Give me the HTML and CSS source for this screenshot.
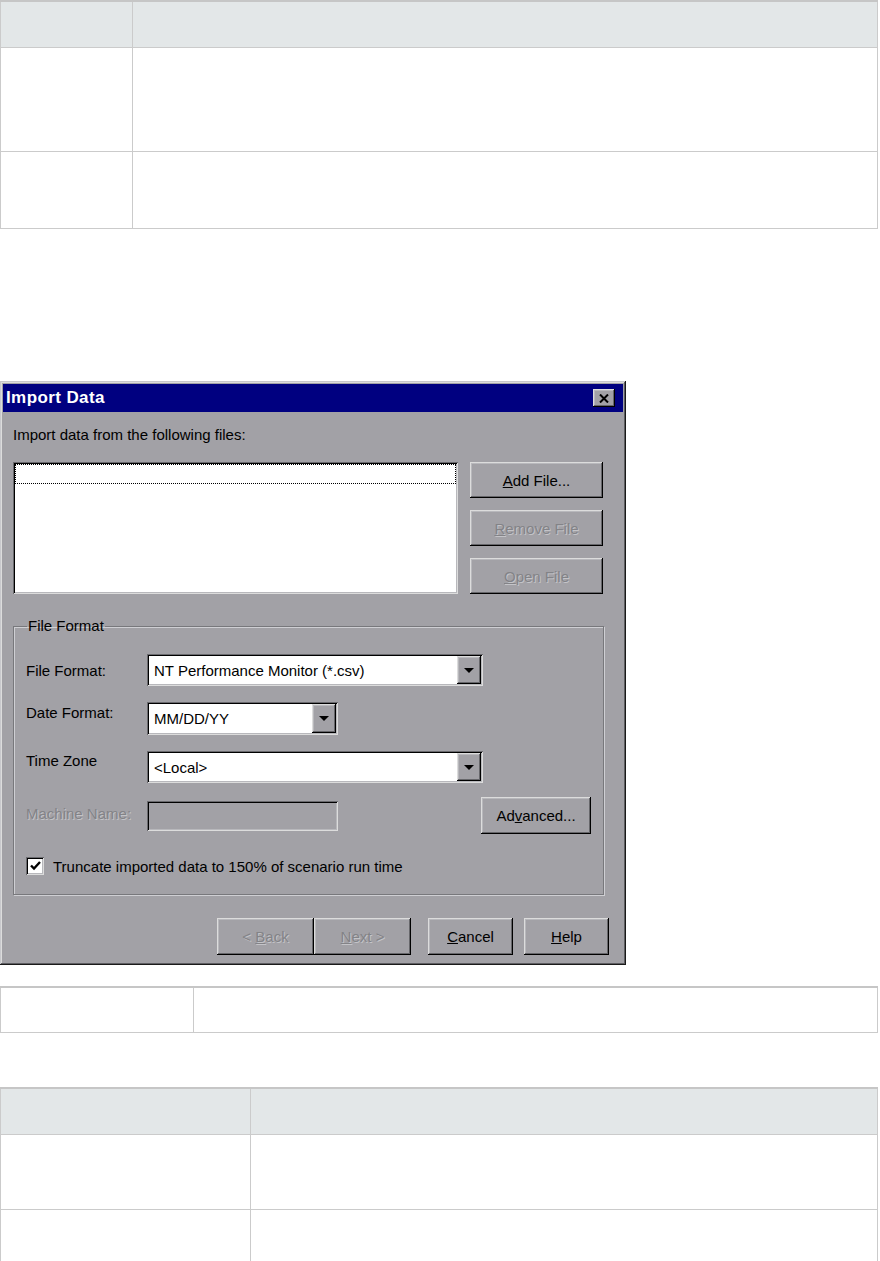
FILE: index.html
```html
<!DOCTYPE html>
<html lang="en">
<head>
    <meta charset="UTF-8">
    <meta name="viewport" content="width=device-width, initial-scale=1.0">
    <title>Import Data</title>
    <link rel="stylesheet" href="styles.css">
</head>
<body>
    <table class="doc-table t1">
        <colgroup><col class="c1"><col></colgroup>
        <tr class="head"><th></th><th></th></tr>
        <tr class="r-tall"><td></td><td></td></tr>
        <tr class="r-mid"><td></td><td></td></tr>
    </table>

    <div class="dialog">
        <div class="titlebar">
            <span class="title">Import Data</span>
            <span class="close-btn raised">
                <svg width="10" height="9" viewBox="0 0 10 9"><path d="M1 0.5 L9 8.5 M9 0.5 L1 8.5" stroke="#000" stroke-width="2"/></svg>
            </span>
        </div>

        <div class="dlg-body">
            <p class="caption">Import data from the following files:</p>
            <div class="files">
                <div class="listbox sunken">
                    <div class="focus-row"></div>
                </div>
                <div class="file-buttons">
                    <div class="btn raised"><span><u>A</u>dd File...</span></div>
                    <div class="btn raised disabled"><span><u>R</u>emove File</span></div>
                    <div class="btn raised disabled"><span><u>O</u>pen File</span></div>
                </div>
            </div>

            <fieldset class="group">
                <legend>File Format</legend>
                <div class="row row-1">
                    <label class="lbl">File Format:</label>
                    <div class="combo sunken wide">
                        <span class="combo-text">NT Performance Monitor (*.csv)</span>
                        <span class="drop raised"><i class="tri"></i></span>
                    </div>
                </div>
                <div class="row row-2">
                    <label class="lbl">Date Format:</label>
                    <div class="combo sunken narrow">
                        <span class="combo-text">MM/DD/YY</span>
                        <span class="drop raised"><i class="tri"></i></span>
                    </div>
                </div>
                <div class="row row-3">
                    <label class="lbl">Time Zone</label>
                    <div class="combo sunken wide">
                        <span class="combo-text">&lt;Local&gt;</span>
                        <span class="drop raised"><i class="tri"></i></span>
                    </div>
                </div>
                <div class="row row-4">
                    <label class="lbl disabled">Machine Name:</label>
                    <div class="edit sunken"></div>
                    <div class="btn raised adv"><span>Ad<u>v</u>anced...</span></div>
                </div>
                <div class="row row-5">
                    <span class="check sunken">
                        <svg width="11" height="10" viewBox="0 0 11 10"><path d="M1 4.5 L4 7.5 L10 1" fill="none" stroke="#000" stroke-width="2.4"/></svg>
                    </span>
                    <span class="check-text">Truncate imported data to 150% of scenario run time</span>
                </div>
            </fieldset>

            <div class="footer">
                <div class="btn raised disabled back"><span>&lt; <u>B</u>ack</span></div>
                <div class="btn raised disabled next"><span><u>N</u>ext &gt;</span></div>
                <div class="btn raised cancel"><span><u>C</u>ancel</span></div>
                <div class="btn raised help"><span><u>H</u>elp</span></div>
            </div>
        </div>
    </div>

    <table class="doc-table t2">
        <colgroup><col class="c1"><col></colgroup>
        <tr class="r-short"><td></td><td></td></tr>
    </table>

    <table class="doc-table t3">
        <colgroup><col class="c1"><col></colgroup>
        <tr class="head"><th></th><th></th></tr>
        <tr class="r-row"><td></td><td></td></tr>
        <tr class="r-last"><td></td><td></td></tr>
    </table>
</body>
</html>
```

FILE: styles.css
```css
body {
    margin: 0;
    background-color: white;
    font-family: 'Liberation Sans', Arial, sans-serif;
}

/* doc tables */
.doc-table {
    width: 878px;
    border-collapse: collapse;
    table-layout: fixed;
    border-top: 2px solid #c6c6c6;
}
.doc-table th, .doc-table td {
    border: 1px solid #cbcbcb;
    padding: 0;
}
.doc-table .head th {
    background-color: #e3e7e8;
    height: 45px;
}
.t1 .c1 { width: 132px; }
.t1 .r-tall td { height: 103px; }
.t1 .r-mid td { height: 76px; }
.t2 { margin-top: 21px; }
.t2 .c1 { width: 193px; }
.t2 .r-short td { height: 44px; }
.t3 { margin-top: 54px; }
.t3 .c1 { width: 250px; }
.t3 .r-row td { height: 74px; }
.t3 .r-last td { height: 60px; border-bottom: none; }

/* dialog */
.dialog {
    margin-top: 152px;
    width: 626px;
    height: 584px;
    box-sizing: border-box;
    padding: 3px;
    background-color: #a2a1a6;
    box-shadow: inset -1px -1px #1a1a1a, inset 1px 1px #c8c8cc, inset -2px -2px #5e5e62, inset 2px 2px #dcdcdc;
    font-size: 15px;
    color: #000;
}
.raised {
    background-color: #a2a1a6;
    box-shadow: inset -1px -1px #000, inset 1px 1px #dcdcdc, inset -2px -2px #66666a, inset 2px 2px #b8b8bc;
}
.sunken {
    background-color: white;
    box-shadow: inset 1px 1px #6a6a6e, inset -1px -1px #dcdcdc, inset 2px 2px #000, inset -2px -2px #b8b8bc;
}
.titlebar {
    height: 28px;
    background-color: #000080;
    display: flex;
    align-items: center;
    justify-content: space-between;
    padding: 0 8px 0 3px;
}
.title {
    color: white;
    font-weight: bold;
    font-size: 17px;
    letter-spacing: 0.4px;
}
.close-btn {
    width: 22px;
    height: 18px;
    display: flex;
    align-items: center;
    justify-content: center;
}

.dlg-body {
    padding: 15px 0 0 10px;
}
.caption {
    margin: 0;
    line-height: 16px;
}
.files {
    display: flex;
    margin-top: 19px;
}
.listbox {
    width: 445px;
    height: 132px;
    box-sizing: border-box;
    padding: 2px;
}
.focus-row {
    height: 20px;
    border: 1px dotted #000;
    box-sizing: border-box;
}
.file-buttons {
    margin-left: 12px;
    display: flex;
    flex-direction: column;
    gap: 12px;
}
.btn {
    height: 36px;
    width: 133px;
    display: flex;
    align-items: center;
    justify-content: center;
    box-sizing: border-box;
}
.btn.disabled {
    color: #838387;
    text-shadow: 1px 1px #c4c4c8;
}

/* group box */
.group {
    margin: 24px 0 0 0;
    width: 591px;
    height: 277px;
    box-sizing: border-box;
    padding: 0 12px;
    border: 1px solid #78787c;
    box-shadow: inset 1px 1px #cfcfd3, 1px 1px #cfcfd3;
}
.group legend {
    padding: 0 1px;
    margin-left: 1px;
    line-height: 16px;
}
.row {
    display: flex;
}
.lbl {
    width: 121px;
    flex-shrink: 0;
    line-height: 16px;
}
.lbl.disabled {
    color: #838387;
    text-shadow: 1px 1px #c4c4c8;
}
.row-1 { margin-top: 20px; height: 32px; }
.row-1 .lbl { padding-top: 9px; }
.row-2 { margin-top: 16px; height: 33px; }
.row-2 .lbl { padding-top: 3px; }
.row-3 { margin-top: 16px; height: 32px; }
.row-3 .lbl { padding-top: 2px; }
.row-4 { margin-top: 14px; height: 37px; align-items: center; }
.row-4 .lbl { padding-bottom: 4px; }
.row-5 { margin-top: 23px; align-items: center; }

.combo {
    display: flex;
    align-items: center;
    justify-content: space-between;
    box-sizing: border-box;
    padding: 2px;
    height: 100%;
}
.combo.wide { width: 336px; }
.combo.narrow { width: 191px; }
.combo-text {
    padding-left: 5px;
}
.drop {
    width: 24px;
    height: 100%;
    display: flex;
    align-items: center;
    justify-content: center;
}
.tri {
    width: 0;
    height: 0;
    border-left: 5px solid transparent;
    border-right: 5px solid transparent;
    border-top: 5px solid #000;
}
.edit {
    width: 191px;
    height: 30px;
    background-color: #a2a1a6;
    box-sizing: border-box;
}
.adv {
    margin-left: auto;
    width: 110px;
    height: 37px;
}
.check {
    width: 18px;
    height: 18px;
    display: flex;
    align-items: center;
    justify-content: center;
    flex-shrink: 0;
}
.check-text {
    margin-left: 9px;
}

/* footer buttons */
.footer {
    display: flex;
    justify-content: flex-end;
    padding-right: 14px;
    margin-top: 23px;
}
.footer .btn { height: 37px; }
.back { width: 97px; }
.next { width: 97px; }
.cancel { width: 85px; margin-left: 17px; }
.help { width: 85px; margin-left: 11px; }
```
